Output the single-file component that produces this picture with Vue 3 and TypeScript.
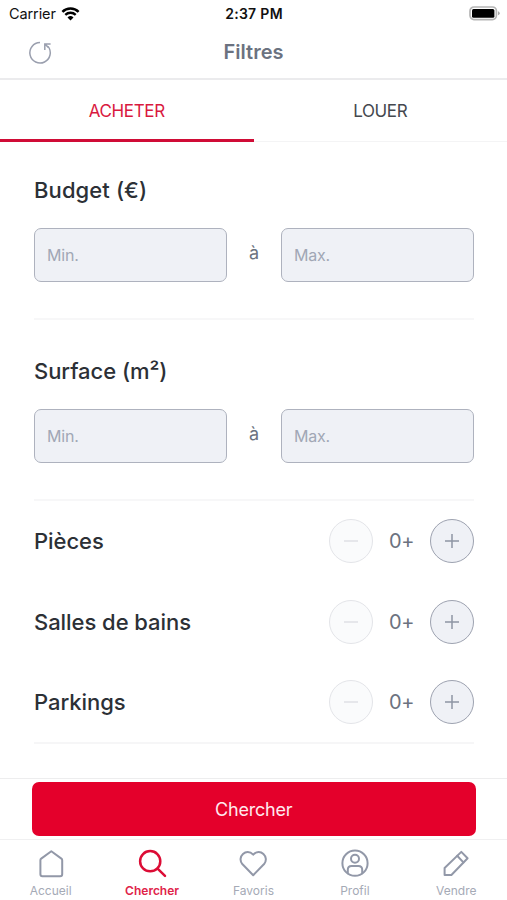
<script setup lang="ts">
import { ref } from 'vue'

interface Range { title: string; cls: string }
interface Counter { label: string; cls: string; value: number }

const modes = ['ACHETER', 'LOUER']
const mode = ref('ACHETER')
const ranges: Range[] = [
  { title: 'Budget (€)', cls: 'budget' },
  { title: 'Surface (m²)', cls: 'surface' },
]
const counters = ref<Counter[]>([
  { label: 'Pièces', cls: 'rooms', value: 0 },
  { label: 'Salles de bains', cls: 'baths', value: 0 },
  { label: 'Parkings', cls: 'parkings', value: 0 },
])
const tabs = ['Accueil', 'Chercher', 'Favoris', 'Profil', 'Vendre']
const activeTab = ref('Chercher')

function step(c: Counter, delta: number) {
  c.value = Math.max(0, c.value + delta)
}
</script>

<template>
  <div class="screen">
    <div class="status">
      <div class="carrier">
        <span class="carrier-name">Carrier</span>
        <svg width="19" height="14" viewBox="0 0 18 14" fill="none" stroke="#000">
          <path d="M0.9 4.9a11.6 11.6 0 0 1 16.2 0" stroke-width="2.5" />
          <path d="M3.8 7.9a7.4 7.4 0 0 1 10.4 0" stroke-width="2.3" />
          <path d="M9 13.5l-3-3a4.3 4.3 0 0 1 6 0z" fill="#000" stroke="none" />
        </svg>
      </div>
      <span class="clock">2:37 PM</span>
      <svg class="battery" width="31" height="15" viewBox="0 0 31 15">
        <rect x="1" y="1" width="26.4" height="12.6" rx="4" fill="#fff" stroke="#b5b5b5" stroke-width="1.7" />
        <rect x="3" y="3" width="22.4" height="8.7" rx="1.5" fill="#000" />
        <path d="M29 5.3q1.7 .5 1.7 2t-1.7 2z" fill="#aaa" />
      </svg>
    </div>

    <header class="header">
      <button class="icon-button reset" aria-label="Réinitialiser">
        <svg width="24" height="24" viewBox="0 0 24 24" fill="none" stroke="#9a9fae" stroke-width="1.5">
          <path d="M12 1.6A10.2 10.2 0 1 0 20 5.4" />
          <path d="M16.8 9V2.9H22.6M17.1 3.2l3.2 3.2" />
        </svg>
      </button>
      <h1 class="title">Filtres</h1>
    </header>

    <nav class="modes">
      <button v-for="m in modes" :key="m" class="mode" :class="{ active: m === mode }" @click="mode = m">{{ m }}</button>
    </nav>

    <main class="content">
      <section v-for="r in ranges" :key="r.title" class="range" :class="r.cls">
        <h2 class="label">{{ r.title }}</h2>
        <div class="fields">
          <input class="field" placeholder="Min." />
          <span class="to">à</span>
          <input class="field" placeholder="Max." />
        </div>
      </section>
      <section class="counters">
        <div v-for="c in counters" :key="c.label" class="counter">
          <h2 class="label" :class="c.cls">{{ c.label }}</h2>
          <div class="stepper">
            <button class="round" :class="{ disabled: c.value === 0 }" aria-label="Moins" @click="step(c, -1)">
              <svg width="14" height="14" viewBox="0 0 14 14"><path d="M0 7H14" /></svg>
            </button>
            <span class="value">{{ c.value }}+</span>
            <button class="round" aria-label="Plus" @click="step(c, 1)">
              <svg width="14" height="14" viewBox="0 0 14 14"><path d="M0 7H14M7 0V14" /></svg>
            </button>
          </div>
        </div>
      </section>
    </main>

    <div class="action">
      <button class="submit">Chercher</button>
    </div>

    <footer class="tabbar">
      <button v-for="t in tabs" :key="t" class="tab" :class="{ active: t === activeTab }" @click="activeTab = t">
        <svg class="tab-icon" width="30" height="30" viewBox="0 0 30 30">
          <path v-if="t === 'Accueil'" d="M4.4 11.2Q4.4 10.2 5.2 9.6L15.3 2.2L25.4 9.6Q26.2 10.2 26.2 11.2V25.2Q26.2 27.2 24.2 27.2H6.4Q4.4 27.2 4.4 25.2Z" />
          <g v-else-if="t === 'Chercher'" class="bold">
            <circle cx="13.2" cy="12.2" r="10.1" />
            <path d="M20.6 19.6L28 26.8" />
          </g>
          <path v-else-if="t === 'Favoris'" d="M15.2 26.2L4.3 15C-1.4 8.2 8.2 -2 15.2 5.7C22.2 -2 31.8 8.2 26.1 15Z" />
          <g v-else-if="t === 'Profil'">
            <circle cx="15" cy="14.2" r="12.6" />
            <circle cx="15" cy="9.7" r="4" />
            <path d="M7.8 24.2V20.7Q7.8 16.9 11.6 16.9H18.4Q22.2 16.9 22.2 20.7V24.2" />
          </g>
          <g v-else>
            <path d="M3.6 26V19L20.3 2.9L26.6 9.3L10.4 26Z" />
            <path d="M16.2 6.8L22.4 13.4" />
          </g>
        </svg>
        <span>{{ t }}</span>
      </button>
    </footer>
  </div>
</template>

<style>
body {
  margin: 0;
  background: #fff;
}
</style>

<style scoped>
.screen {
  box-sizing: border-box;
  width: 507px;
  height: 900px;
  display: flex;
  flex-direction: column;
  overflow: hidden;
  background: #fff;
  color: #2c3036;
  font-family: Inter, "Liberation Sans", sans-serif;
}
button {
  margin: 0;
  padding: 0;
  border: 0;
  background: none;
  font: inherit;
  color: inherit;
}
h1, h2 {
  margin: 0;
}
.status {
  display: grid;
  grid-template-columns: 1fr auto 1fr;
  align-items: center;
  height: 27px;
  padding: 0 7px 0 9px;
  color: #111;
  font-size: 14.5px;
}
.carrier {
  display: flex;
  align-items: center;
  gap: 5.5px;
}
.carrier-name {
  letter-spacing: -0.1px;
}
.clock {
  padding-right: 1px;
  font-weight: 600;
  font-size: 14px;
  letter-spacing: 0.3px;
}
.battery {
  justify-self: end;
}
.header {
  display: grid;
  grid-template-columns: 80px 1fr 80px;
  align-items: center;
  height: 51px;
  border-bottom: 2px solid #ebebed;
}
.reset {
  justify-self: center;
  height: 24px;
}
.title {
  position: relative;
  top: -1px;
  text-align: center;
  color: #6b7280;
  font-size: 20px;
  font-weight: 600;
  letter-spacing: 0;
}
.modes {
  display: grid;
  grid-template-columns: 1fr 1fr;
  height: 61px;
  border-bottom: 1px solid #f4f4f5;
}
.mode {
  box-sizing: border-box;
  height: 62px;
  padding-top: 2px;
  border-bottom: 3px solid transparent;
  color: #44484e;
  font-size: 17px;
  letter-spacing: -0.35px;
}
.mode.active {
  color: #d9193f;
  border-color: #d00c36;
}
.content {
  flex: 1;
  padding: 0 33px 0 34px;
}
.range {
  box-sizing: border-box;
  height: 181px;
  padding-top: 37px;
  border-bottom: 2px solid #f7f7f8;
}
.budget {
  height: 178px;
  padding-top: 34px;
}
.label {
  color: #2c3036;
  font-size: 22px;
  line-height: 28px;
  font-weight: 500;
  letter-spacing: -0.05px;
}
.budget .label {
  letter-spacing: 0.1px;
}
.fields {
  display: grid;
  grid-template-columns: 193px 54px 193px;
  align-items: center;
  padding-top: 24px;
}
.field {
  box-sizing: border-box;
  width: 193px;
  height: 54px;
  padding: 0 12px;
  border: 1.5px solid #aeb2be;
  border-radius: 7px;
  background: #eff1f6;
  font: inherit;
  font-size: 16px;
  letter-spacing: -0.2px;
  outline: none;
}
.field::placeholder {
  color: #a1a7b5;
  opacity: 1;
}
.to {
  padding-bottom: 6px;
  text-align: center;
  color: #6b7280;
  font-size: 18px;
}
.counters {
  box-sizing: border-box;
  height: 243px;
  border-bottom: 2px solid #f6f6f7;
}
.counter {
  display: flex;
  align-items: center;
  justify-content: space-between;
  height: 80.5px;
}
.stepper {
  display: grid;
  grid-template-columns: 44px 57px 44px;
  align-items: center;
}
.round {
  box-sizing: border-box;
  display: flex;
  align-items: center;
  justify-content: center;
  width: 44px;
  height: 44px;
  border: 1.5px solid #9da2b0;
  border-radius: 50%;
  background: #eff1f6;
}
.round path {
  stroke: #8f95a4;
  stroke-width: 1.5;
}
.round.disabled {
  opacity: 0.28;
}
.value {
  text-align: center;
  color: #6b7280;
  font-size: 20px;
  letter-spacing: -0.3px;
}
.action {
  box-sizing: border-box;
  height: 61px;
  padding: 3px 31px 0 31.5px;
  border-top: 1px solid #ededee;
}
.submit {
  width: 100%;
  height: 54px;
  border-radius: 7px;
  background: #e4002b;
  color: #ffe9ee;
  font-size: 18px;
  letter-spacing: -0.2px;
}
.tabbar {
  box-sizing: border-box;
  display: grid;
  grid-template-columns: repeat(5, 1fr);
  height: 61px;
  border-top: 1px solid #f0f0f1;
}
.tab {
  display: flex;
  flex-direction: column;
  align-items: center;
  gap: 4px;
  padding-top: 9px;
  color: #a5aab6;
  font-size: 12px;
  line-height: 16px;
}
.tab-icon {
  width: 30px;
  height: 30px;
  fill: none;
  stroke: #9298a8;
  stroke-width: 2;
  stroke-linejoin: round;
  stroke-linecap: round;
}
.tab.active {
  color: #e02349;
  font-weight: 600;
}
.tab.active .tab-icon {
  stroke: #dc0c35;
}
.bold {
  stroke-width: 2.5;
}
</style>
